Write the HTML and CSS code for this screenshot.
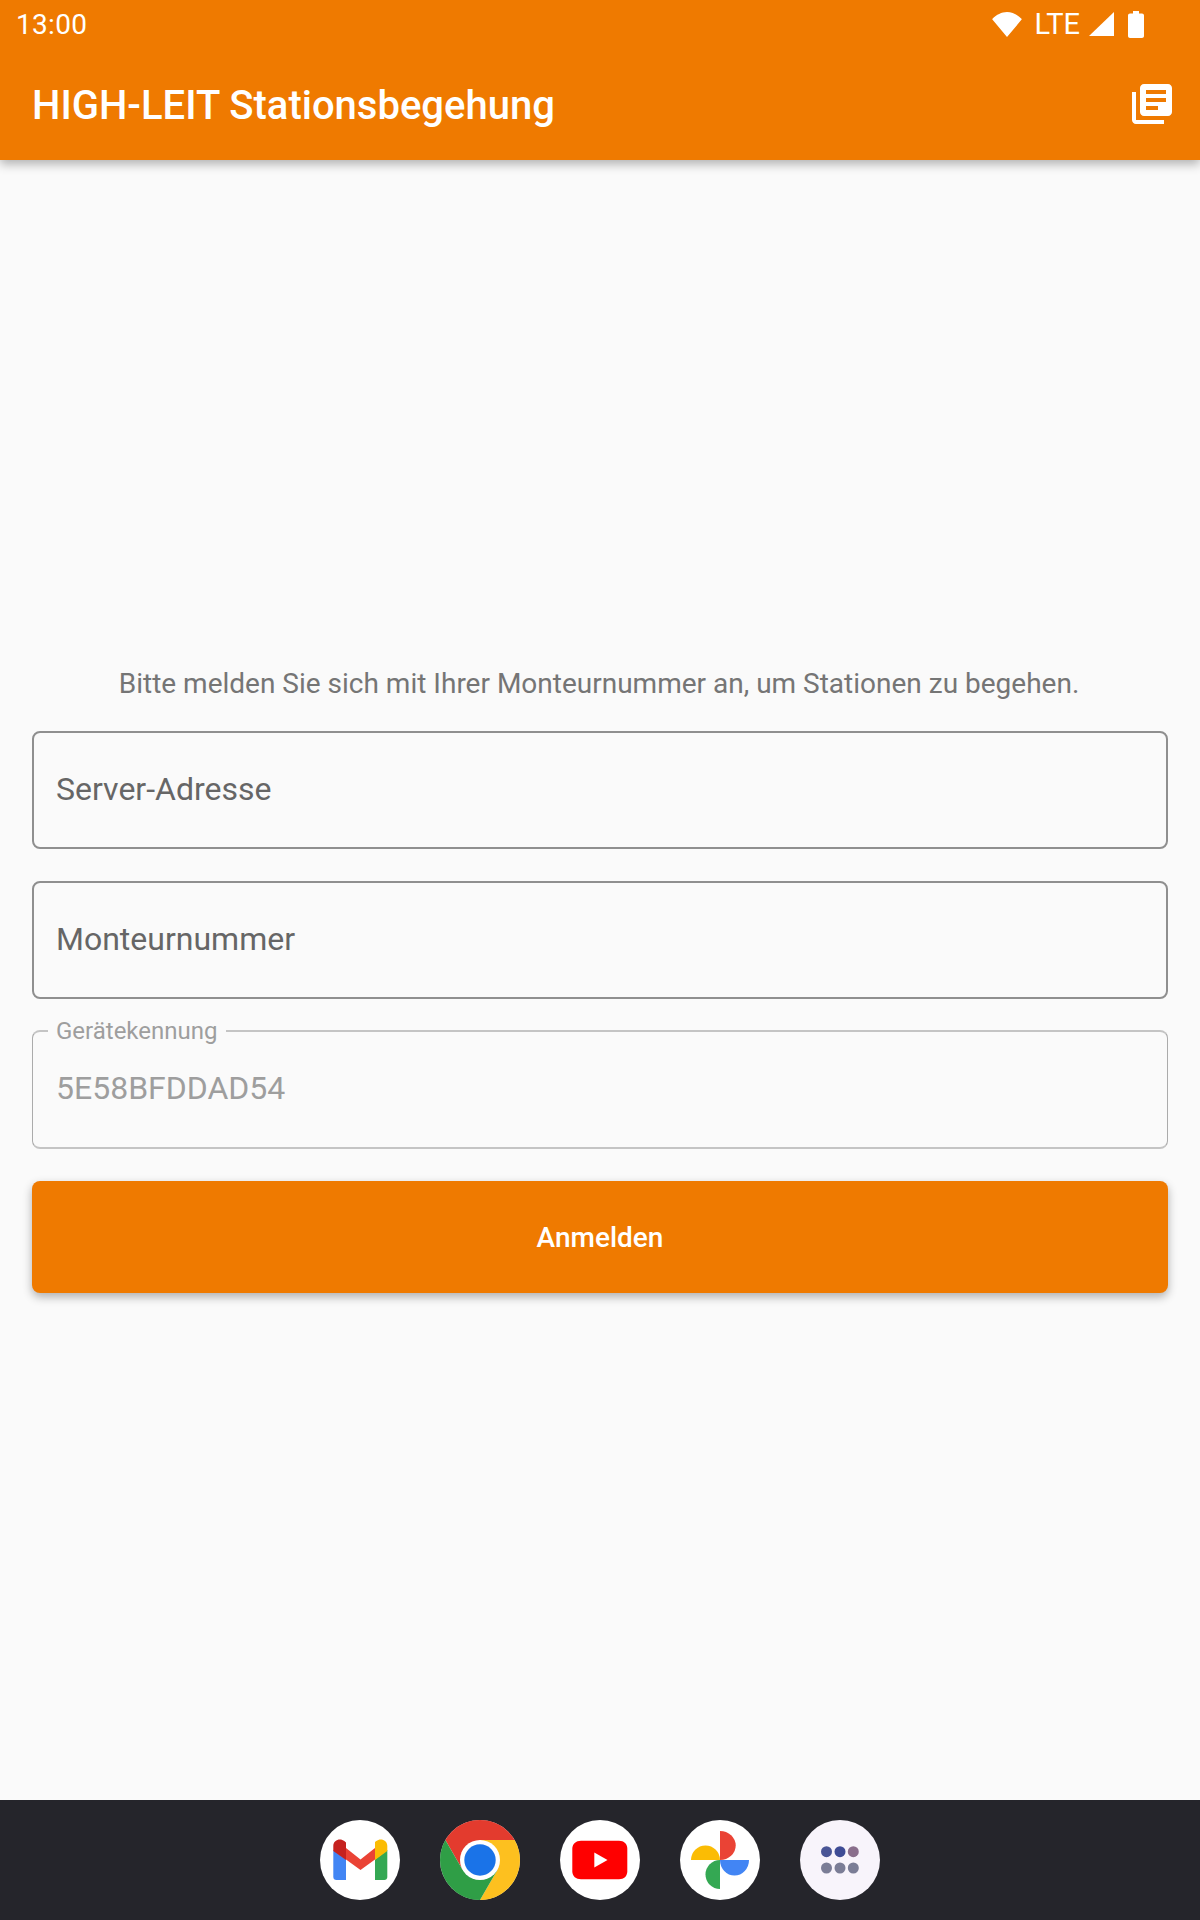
FILE: index.html
```html
<!DOCTYPE html>
<html lang="de">
<head>
    <meta charset="UTF-8">
    <meta name="viewport" content="width=device-width, initial-scale=1.0">
    <title>HIGH-LEIT Stationsbegehung</title>
    <link rel="stylesheet" href="styles.css">
</head>
<body>
    <header class="app-header">
        <!-- Statusleiste -->
        <div class="status-bar">
            <span class="status-time">13:00</span>
            <div class="status-icons">
                <svg class="icon-wifi" viewBox="0 0 30 25"><path d="M15 25 .4 7.6C.2 7.300.2 6.900.5 6.700 4.500 2.800 9.600 0 15 0s10.500 2.800 14.500 6.700c.3.200.3.600.1.900L15 25z"/></svg>
                <span class="status-lte">LTE</span>
                <svg class="icon-signal" viewBox="0 0 25 24"><path d="M25 0v24H0z"/></svg>
                <svg class="icon-battery" viewBox="0 0 16 27"><path d="M5 0h6v2.500h3c1.100 0 2 .9 2 2V25c0 1.100-.9 2-2 2H2c-1.100 0-2-.9-2-2V4.500c0-1.100.9-2 2-2h3z"/></svg>
            </div>
        </div>

        <!-- Toolbar -->
        <div class="toolbar">
            <h1 class="toolbar-title">HIGH-LEIT Stationsbegehung</h1>
            <svg class="icon-library" viewBox="0 0 24 24"><path d="M4 6H2v14c0 1.100.9 2 2 2h14v-2H4V6zm16-4H8c-1.100 0-2 .9-2 2v12c0 1.100.9 2 2 2h12c1.100 0 2-.9 2-2V4c0-1.100-.9-2-2-2zm-1 9H9V9h10v2zm-4 4H9v-2h6v2zm4-8H9V5h10v2z"/></svg>
        </div>
    </header>

    <main class="login">
        <p class="login-intro">Bitte melden Sie sich mit Ihrer Monteurnummer an, um Stationen zu begehen.</p>

        <div class="field">Server-Adresse</div>
        <div class="field">Monteurnummer</div>
        <div class="field field-disabled">
            <span class="field-label">Gerätekennung</span>
            5E58BFDDAD54
        </div>

        <button class="login-button" type="button">Anmelden</button>
    </main>

    <!-- Dock -->
    <nav class="dock">
        <div class="dock-app">
            <svg viewBox="0 0 80 80">
                <path fill="#4285f4" d="M13.300 30 26 39.500V60h-9.700c-1.700 0-3-1.300-3-3z"/>
                <path fill="#34a853" d="M67.300 30 55 39.500V60h9.300c1.700 0 3-1.300 3-3z"/>
                <path fill="#ea4335" d="M26 28 40.500 39.500 55 28v11.500L40.500 50 26 39.500z"/>
                <path fill="#c5221f" d="M13.300 31v-5c0-6.500 7.200-8.300 11-5l1.700 1.400v17.600z"/>
                <path fill="#fbbc04" d="M67.300 31v-5c0-6.500-7.200-8.300-11-5L55 22.100v17.900z"/>
            </svg>
        </div>
        <div class="dock-app">
            <svg viewBox="0 0 80 80">
                <path fill="#e33b2e" d="M40 20h34.640A40 40 0 0 0 5.360 20L22.680 50z"/>
                <path fill="#fdc01f" d="M40 20h34.640A40 40 0 0 1 40 80l17.320-30z"/>
                <path fill="#2f9e46" d="M57.320 50 40 80A40 40 0 0 1 5.360 20L22.680 50z"/>
                <circle cx="40" cy="40" r="20" fill="#fff"/>
                <circle cx="40" cy="40" r="15.700" fill="#1a73e8"/>
            </svg>
        </div>
        <div class="dock-app">
            <svg viewBox="0 0 80 80">
                <path fill="#f00" d="M21 20.700h38c5 0 8.300 3 8.300 8v22.600c0 5-3.300 8-8.300 8H21c-5 0-8.700-3-8.700-8V28.700c0-5 3.700-8 8.700-8z"/>
                <path fill="#fff" d="M34.300 32.500v15L47.500 40z"/>
            </svg>
        </div>
        <div class="dock-app">
            <svg viewBox="0 0 80 80">
                <path fill="#fbbc04" d="M11 40a14.500 14.500 0 0 1 29 0z"/>
                <path fill="#ea4335" d="M40 11a15.700 14.500 0 0 1 0 29z"/>
                <path fill="#4285f4" d="M69 40a14.500 15.500 0 0 1-29 0z"/>
                <path fill="#34a853" d="M40 69a14.500 14.500 0 0 1 0-29z"/>
            </svg>
        </div>
        <div class="dock-app dock-app-drawer">
            <svg viewBox="0 0 80 80">
                <circle cx="26.500" cy="31.700" r="5.500" fill="#4a5596"/>
                <circle cx="40" cy="31.700" r="5.500" fill="#3f4c95"/>
                <circle cx="53.300" cy="31.700" r="5.500" fill="#8a6e8c"/>
                <circle cx="26.500" cy="48" r="5.500" fill="#7b7d96"/>
                <circle cx="40" cy="48" r="5.500" fill="#7b7d96"/>
                <circle cx="53.300" cy="48" r="5.500" fill="#7b7d96"/>
            </svg>
        </div>
    </nav>
</body>
</html>
```

FILE: styles.css
```css
* {
    box-sizing: border-box;
}

body {
    margin: 0;
    height: 1920px;
    display: flex;
    flex-direction: column;
    background-color: #fafafa;
    font-family: Roboto, "Noto Sans", sans-serif;
    color: #666;
}

.app-header {
    background-color: #ef7a00;
    color: #fff;
    height: 160px;
    box-shadow: 0 4px 10px rgba(0, 0, 0, 0.3);
}

.status-bar {
    height: 48px;
    padding: 0 56px 0 16px;
    display: flex;
    justify-content: space-between;
    align-items: center;
}

.status-time {
    font-size: 28px;
    letter-spacing: 0.3px;
}

.status-icons {
    display: flex;
    align-items: center;
}

.status-icons svg {
    fill: #fff;
    display: block;
}

.icon-wifi {
    width: 30px;
    height: 25px;
}

.status-lte {
    font-size: 29px;
    margin-left: 12px;
}

.icon-signal {
    width: 25px;
    height: 24px;
    margin-left: 9px;
}

.icon-battery {
    width: 16px;
    height: 27px;
    margin-left: 14px;
}

.toolbar {
    height: 112px;
    padding: 2px 24px 0 32px;
    display: flex;
    justify-content: space-between;
    align-items: center;
}

.toolbar-title {
    margin: 0;
    font-size: 40px;
    font-weight: 500;
}

.icon-library {
    width: 48px;
    height: 48px;
    margin-top: -2px;
    fill: #fff;
}

.login {
    flex: 1;
    padding: 507px 32px 0;
    display: flex;
    flex-direction: column;
    gap: 32px;
}

.login-intro {
    margin: 0 2px -2px 0;
    height: 34px;
    line-height: 34px;
    font-size: 28px;
    text-align: center;
    color: #757575;
}

.field {
    position: relative;
    height: 118px;
    padding: 0 22px 2px;
    display: flex;
    align-items: center;
    border: 2px solid #8f8f8f;
    border-radius: 8px;
    font-size: 32px;
    color: #666;
}

.field-disabled {
    height: 119px;
    margin-top: -1px;
    padding: 0 23px 4px;
    border-width: 2px 1px;
    border-color: #c4c4c4 #ababab;
    color: #9e9e9e;
}

.field-label {
    position: absolute;
    top: -17px;
    left: 15px;
    padding: 0 8px;
    background-color: #fafafa;
    font-size: 24px;
    line-height: 32px;
}

.login-button {
    height: 112px;
    border: none;
    border-radius: 8px;
    background-color: #ef7a00;
    color: #fff;
    font-family: inherit;
    font-size: 28px;
    font-weight: 500;
    box-shadow: 0 4px 10px rgba(0, 0, 0, 0.3);
}

.dock {
    height: 120px;
    background-color: #25252b;
    display: flex;
    justify-content: center;
    align-items: center;
    gap: 40px;
}

.dock-app {
    width: 80px;
    height: 80px;
    border-radius: 50%;
    background-color: #fff;
}

.dock-app svg {
    display: block;
    width: 80px;
    height: 80px;
}

.dock-app-drawer {
    background-color: #f8f4fb;
}
```
